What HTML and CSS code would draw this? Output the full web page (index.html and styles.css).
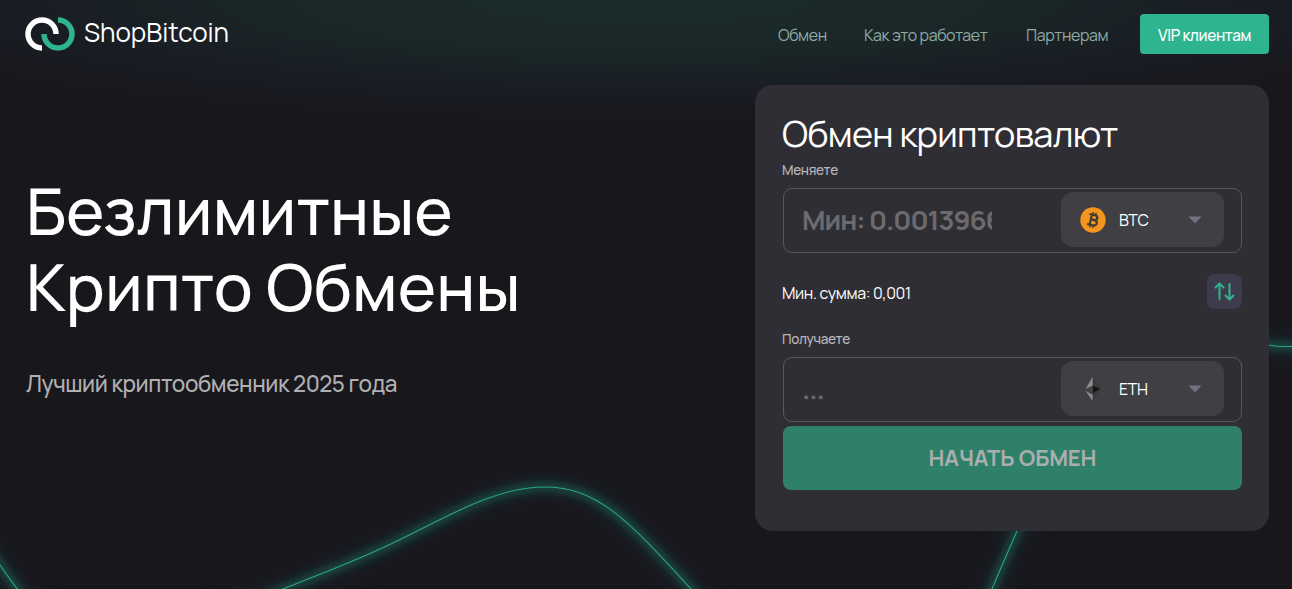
FILE: index.html
```html
<!DOCTYPE html>
<html lang="ru">
<head>
  <meta charset="UTF-8" />
  <meta name="viewport" content="width=device-width, initial-scale=1.0" />
  <title>ShopBitcoin</title>
  <link rel="stylesheet" href="styles.css">
</head>
<body>

  <svg class="bg-lines" viewBox="0 0 1292 589" fill="none">
    <defs>
      <filter id="glow-near" x="-10%" y="-50%" width="120%" height="200%">
        <feGaussianBlur stdDeviation="5" />
      </filter>
      <filter id="glow-far" x="-10%" y="-50%" width="120%" height="200%">
        <feGaussianBlur stdDeviation="13" />
      </filter>
      <g id="curves">
        <path d="M-40 508 L0 565 C6 574 12 582 24 598 L50 634" />
        <path d="M218 615 L283 589 C320 574 350 563 380 549 C440 522 490 487 545 487 C595 487 625 516 691 589 L730 632" />
        <path d="M972 637 L992 589 C1000 569 1009 550 1017 531 C1070 410 1150 300 1269 345 C1277 347 1285 347 1302 346 L1330 344" />
      </g>
    </defs>
    <use href="#curves" class="glow-far" filter="url(#glow-far)" />
    <use href="#curves" class="glow-near" filter="url(#glow-near)" />
    <use href="#curves" class="line" />
  </svg>

  <header class="header">
    <a class="logo" href="#">
      <svg width="50" height="34" viewBox="0 0 50 34" fill="none" stroke-width="5.500">
        <path d="M17 31 A14 14 0 1 1 31 17" stroke="#fff" />
        <path d="M33 3 A14 14 0 1 1 19 17" stroke="#2eb48e" />
      </svg>
      <span>ShopBitcoin</span>
    </a>
    <nav class="nav">
      <a class="nav-exchange" href="#">Обмен</a>
      <a class="nav-how" href="#">Как это работает</a>
      <a class="nav-partners" href="#">Партнерам</a>
      <a class="vip" href="#">VIP клиентам</a>
    </nav>
  </header>

  <main class="main">
    <section class="hero">
      <h1>Безлимитные<br>Крипто Обмены</h1>
      <p>Лучший криптообменник 2025 года</p>
    </section>

    <form class="card">
      <h2>Обмен криптовалют</h2>

      <label class="label">Меняете</label>
      <div class="field">
        <div class="amount">Мин: 0.0013966</div>
        <div class="select">
          <svg width="26" height="26" viewBox="0 0 26 26">
            <circle cx="13" cy="13" r="12.700" fill="#f4951f" />
            <g transform="rotate(13 13 13)" fill="none" stroke="#3f3b38" stroke-width="2.200">
              <path d="M8.200 7.900 H13.800 C17.800 7.900 17.800 12.700 13.800 12.700 H10.800 M13.800 12.700 C18.600 12.700 18.600 18.200 13.800 18.200 H8.200 M10.800 7.900 V18.200" />
              <path d="M11.600 5.200 V8 M14.500 5.200 V8 M11.600 18 V20.800 M14.500 18 V20.800" stroke-width="1.500" />
            </g>
          </svg>
          <span>BTC</span>
          <svg class="arrow" width="14" height="8" viewBox="0 0 14 8"><path d="M0.500 0.500 H13.500 L7 7.500 Z" fill="#717180" /></svg>
        </div>
      </div>

      <div class="middle">
        <span>Мин. сумма: 0,001</span>
        <button class="swap" type="button">
          <svg width="22" height="20" viewBox="0 0 22 20" fill="none" stroke="#2eb48e" stroke-width="2" stroke-linecap="round" stroke-linejoin="round">
            <path d="M5.500 17 V1.500 M1.500 5.500 L5.500 1.500 L9.500 5.500" />
            <path d="M15.500 2 V17.500 M11.500 13.500 L15.500 17.500 L19.500 13.500" />
          </svg>
        </button>
      </div>

      <label class="label label-get">Получаете</label>
      <div class="field">
        <div class="amount">...</div>
        <div class="select">
          <svg width="26" height="26" viewBox="0 0 26 26">
            <path d="M12.800 0.500 V9.800 L5.500 13 Z" fill="#8c8c8c" />
            <path d="M12.800 0.500 L20.300 13 L12.800 9.800 Z" fill="#3a3a3b" />
            <path d="M5.500 13 L12.800 9.800 V17.200 Z" fill="#454546" />
            <path d="M20.300 13 L12.800 9.800 V17.200 Z" fill="#141416" />
            <path d="M5.500 14.700 L12.800 19 V25.200 Z" fill="#8c8c8c" />
            <path d="M20.300 14.700 L12.800 19 V25.200 Z" fill="#3a3a3b" />
          </svg>
          <span>ETH</span>
          <svg class="arrow" width="14" height="8" viewBox="0 0 14 8"><path d="M0.500 0.500 H13.500 L7 7.500 Z" fill="#717180" /></svg>
        </div>
      </div>

      <button class="submit" type="button">НАЧАТЬ ОБМЕН</button>
    </form>
  </main>

</body>
</html>
```

FILE: styles.css
```css
* {
  box-sizing: border-box;
}

body {
  margin: 0;
  height: 589px;
  overflow: hidden;
  color: #fff;
  font-family: Manrope, Inter, sans-serif;
  letter-spacing: -0.02em;
  background-color: #18171c;
  background-image: radial-gradient(ellipse 860px 125px at 640px 0, #1b2b2a 0%, #1a2728 40%, #191c23 75%, #18171c 100%);
}

a {
  color: inherit;
  text-decoration: none;
}

/* Glowing curves behind the content */
.bg-lines {
  position: absolute;
  top: 0;
  left: 0;
  width: 1292px;
  height: 589px;
  z-index: -1;
}

.glow-far {
  stroke: #1b3a4a;
  stroke-width: 18;
  opacity: 0.3;
}

.glow-near {
  stroke: #1f9a72;
  stroke-width: 5;
  opacity: 0.65;
}

.line {
  stroke: #2ba583;
  stroke-width: 1.1;
}

/* Header */
.header {
  display: flex;
  justify-content: space-between;
  align-items: center;
  height: 68px;
  padding: 0 23px 0 25px;
}

.logo {
  display: flex;
  align-items: center;
  gap: 9px;
  font-size: 26px;
  letter-spacing: 0;
}

.logo span {
  line-height: 34px;
  padding-bottom: 4px;
}

.nav {
  display: flex;
  align-items: center;
  font-size: 16px;
  letter-spacing: -0.4px;
  color: #8fa9a3;
}

.nav a {
  padding-top: 1px;
}

.nav-exchange {
  width: 86px;
}

.nav-how {
  width: 162px;
}

.nav-partners {
  width: 114px;
}

.nav .vip {
  width: 129px;
  height: 40px;
  padding: 0;
  border-radius: 4px;
  background-color: #2eb48e;
  color: #fff;
  font-size: 15.5px;
  font-weight: 500;
  line-height: 42px;
  text-align: center;
}

/* Content */
.main {
  display: flex;
  justify-content: space-between;
  align-items: flex-start;
  padding: 17px 23px 0 26px;
}

.hero {
  padding-top: 88px;
}

.hero h1 {
  margin: 0;
  font-size: 65px;
  font-weight: 500;
  letter-spacing: 0.1px;
  line-height: 76px;
  white-space: nowrap;
}

.hero p {
  margin: 43px 0 0;
  font-size: 22.5px;
  font-weight: 500;
  letter-spacing: -0.43px;
  line-height: 32px;
  color: #b0b0b3;
}

/* Exchange card */
.card {
  width: 514px;
  height: 446px;
  padding: 26px 27px 0;
  border-radius: 18px;
  background-color: #302e35;
}

.card h2 {
  margin: 0;
  font-size: 36px;
  font-weight: 400;
  letter-spacing: -0.67px;
  line-height: 46px;
  white-space: nowrap;
}

.label {
  display: block;
  height: 31px;
  font-size: 13.6px;
  font-weight: 500;
  letter-spacing: -0.35px;
  line-height: 26px;
  color: #b8b7bb;
}

.field {
  display: flex;
  justify-content: space-between;
  align-items: center;
  width: 459px;
  height: 65px;
  margin-left: 1px;
  padding: 0 17px 2px 18px;
  border: 1px solid #58575c;
  border-radius: 9px;
}

.amount {
  width: 190px;
  overflow: hidden;
  font-size: 27.5px;
  font-weight: 700;
  letter-spacing: -1.05px;
  line-height: 40px;
  white-space: nowrap;
  color: #6b6a6f;
}

.select {
  display: flex;
  align-items: center;
  width: 163px;
  height: 55px;
  padding: 0 22px 0 19px;
  border-radius: 12px;
  background-color: #403f44;
  font-size: 16px;
}

.select span {
  margin-left: 13px;
}

.select .arrow {
  margin-left: auto;
}

.middle {
  display: flex;
  justify-content: space-between;
  align-items: center;
  height: 77px;
  font-size: 16px;
  letter-spacing: -0.36px;
}

.middle span {
  padding-top: 2px;
}

.swap {
  display: flex;
  justify-content: center;
  align-items: center;
  width: 35px;
  height: 35px;
  padding: 0;
  border: none;
  border-radius: 8px;
  background-color: #3c3c4c;
}

.label-get {
  height: 27px;
  line-height: 19px;
}

.submit {
  display: block;
  width: 459px;
  height: 64px;
  margin: 4px 0 0 1px;
  padding: 0;
  border: none;
  border-radius: 8px;
  background-color: #2f8069;
  color: #a9aeae;
  font-family: inherit;
  font-size: 22px;
  font-weight: 700;
  letter-spacing: -0.1px;
}
```
